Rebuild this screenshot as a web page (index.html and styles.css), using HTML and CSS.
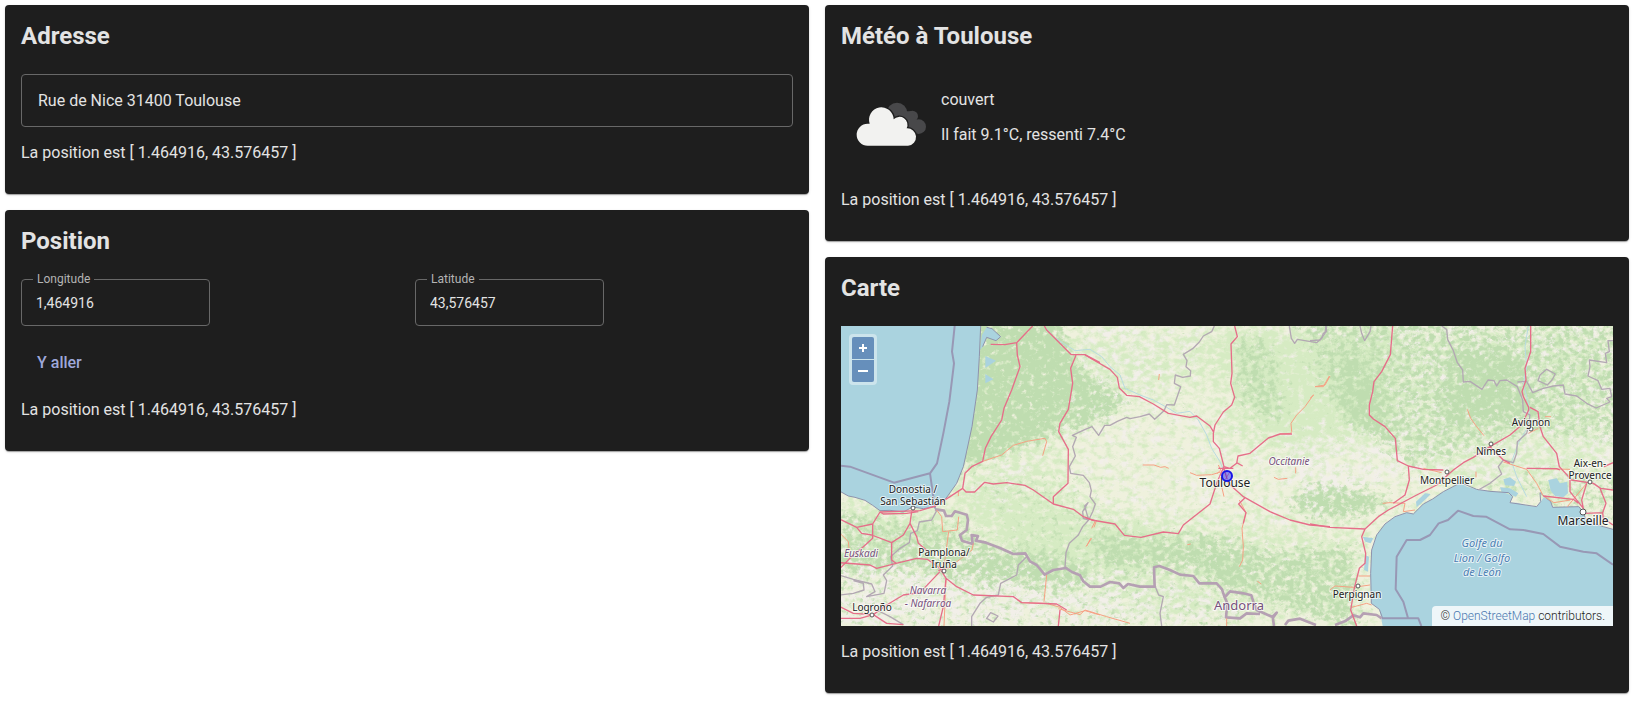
FILE: index.html
```html
<!DOCTYPE html>
<html lang="fr">
<head>
<meta charset="utf-8">
<title>Adresse, position, météo et carte</title>
<link rel="stylesheet" href="styles.css">
</head>
<body>
<main class="board">
  <div class="column">
    <section class="card">
      <h2 class="card-title">Adresse</h2>
      <input class="address" type="text" aria-label="Adresse" value="Rue de Nice 31400 Toulouse">
      <p class="text">La position est [ 1.464916, 43.576457 ]</p>
    </section>
    <section class="card">
      <h2 class="card-title">Position</h2>
      <div class="fields">
        <div class="field">
          <label class="field-label" for="lon">Longitude</label>
          <input class="field-input" id="lon" type="text" value="1,464916">
        </div>
        <div class="field">
          <label class="field-label" for="lat">Latitude</label>
          <input class="field-input" id="lat" type="text" value="43,576457">
        </div>
      </div>
      <button class="go" type="button">Y aller</button>
      <p class="text">La position est [ 1.464916, 43.576457 ]</p>
    </section>
  </div>
  <div class="column">
    <section class="card">
      <h2 class="card-title">Météo à Toulouse</h2>
      <div class="weather">
        <svg class="weather-icon" viewBox="72 223 300 300" aria-hidden="true">
          <g fill="#48484a">
            <circle cx="240" cy="340" r="31"/><circle cx="286" cy="350" r="17"/><circle cx="305" cy="381" r="22"/>
            <path d="M240 335H286L300 365V403H250Z"/>
          </g>
          <g fill="#f2f2f0" stroke="#1e1e1e" stroke-width="8" paint-order="stroke">
            <path d="M152 438A33 33 0 0 1 152 372L158 372A37 37 0 1 1 230 359A24 24 0 0 1 269 386A26 26 0 1 1 273 438Z"/>
          </g>
        </svg>
        <div>
          <p class="text">couvert</p>
          <p class="text">Il fait 9.1°C, ressenti 7.4°C</p>
        </div>
      </div>
      <p class="text">La position est [ 1.464916, 43.576457 ]</p>
    </section>
    <section class="card">
      <h2 class="card-title">Carte</h2>
      <div class="map">
        <svg class="map-canvas" viewBox="0 0 772 300" preserveAspectRatio="xMidYMid slice" role="img" aria-label="Carte autour de Toulouse">
          <defs>
            <filter id="forest" filterUnits="userSpaceOnUse" x="0" y="0" width="772" height="300" color-interpolation-filters="sRGB">
              <feGaussianBlur in="SourceAlpha" stdDeviation="7" result="m"/>
              <feTurbulence type="fractalNoise" baseFrequency=".17 .2" numOctaves="5" seed="4"/>
              <feColorMatrix values="0 0 0 0 0 0 0 0 0 0 0 0 0 0 0 1 0 0 0 0" result="n"/>
              <feComposite in="m" in2="n" operator="arithmetic" k2=".5" k3=".5"/>
              <feComponentTransfer result="a"><feFuncA type="linear" slope="8" intercept="-3"/></feComponentTransfer>
              <feFlood flood-color="#bfddb0"/><feComposite in2="a" operator="in"/>
            </filter>
            <filter id="meadow" filterUnits="userSpaceOnUse" x="0" y="0" width="772" height="300" color-interpolation-filters="sRGB">
              <feGaussianBlur in="SourceAlpha" stdDeviation="12" result="m"/>
              <feTurbulence type="fractalNoise" baseFrequency=".14 .18" numOctaves="5" seed="11"/>
              <feColorMatrix values="0 0 0 0 0 0 0 0 0 0 0 0 0 0 0 1 0 0 0 0" result="n"/>
              <feComposite in="m" in2="n" operator="arithmetic" k2=".5" k3=".5"/>
              <feComponentTransfer result="a"><feFuncA type="linear" slope="6" intercept="-2"/></feComponentTransfer>
              <feFlood flood-color="#d6ebc3"/><feComposite in2="a" operator="in"/>
            </filter>
            <filter id="bare" filterUnits="userSpaceOnUse" x="0" y="0" width="772" height="300" color-interpolation-filters="sRGB">
              <feGaussianBlur in="SourceAlpha" stdDeviation="8" result="m"/>
              <feTurbulence type="fractalNoise" baseFrequency=".1" numOctaves="5" seed="23"/>
              <feColorMatrix values="0 0 0 0 0 0 0 0 0 0 0 0 0 0 0 1 0 0 0 0" result="n"/>
              <feComposite in="m" in2="n" operator="arithmetic" k2=".5" k3=".5"/>
              <feComponentTransfer result="a"><feFuncA type="linear" slope="8" intercept="-2.8"/></feComponentTransfer>
              <feFlood flood-color="#f2efe9"/><feComposite in2="a" operator="in"/>
            </filter>
          </defs>
          <rect width="772" height="300" fill="#eff1dd"/>
          <g filter="url(#bare)">
            <path fill-opacity=".4" d="M0 190L100 215L200 235L390 265L400 300H0Z"/>
            <path fill-opacity=".35" d="M240 0H370L340 60L250 85L180 160L190 200L120 190L130 150L230 100Z"/>
            <path fill-opacity=".35" d="M400 0H772V160H600L560 150L500 190H470Z"/>
            <path fill-opacity=".2" d="M230 80H480V250H230Z"/>
          </g>
          <g filter="url(#meadow)">
            <path fill-opacity=".2" d="M0 0H772V300H0Z"/>
            <path fill-opacity=".2" d="M130 0H772V160L600 170L560 100L420 110L370 140L380 60L300 70L220 100L230 200L400 190L520 200L510 300H330L180 240L100 180L130 130Z"/>
            <path fill-opacity=".3" d="M360 0H560L540 110L430 130L400 60Z M110 165L240 180L350 210L300 240L180 230Z M0 170L120 190L100 230L0 240Z"/>
          </g>
          <g filter="url(#forest)">
            <path fill-opacity=".55" d="M130 -20H212L232 32L230 60L216 110L142 138L112 150Z"/>
            <path fill-opacity=".5" d="M190 -10L235 32L290 76L265 95L222 110L230 40Z"/>
            <path fill-opacity=".38" d="M392 10H430L450 90L420 100L395 70Z"/>
            <path fill-opacity=".34" d="M450 -20L790 -20V120L690 110L620 130L570 150L540 120L480 70Z"/>
            <path fill-opacity=".5" d="M440 180L470 158L520 160L560 175L510 195L470 190Z M640 160L670 156L690 170L640 168Z"/>
            <path fill-opacity=".42" d="M250 210L370 205L440 225L515 215L520 310L400 270L350 240L260 240Z"/>
            <path fill-opacity=".38" d="M-20 175L60 195L120 195L160 220L250 235L240 262L130 255L70 240L-20 250Z"/>
            <path fill-opacity=".18" d="M-20 230H400V320H-20Z M130 150L240 150L300 220L180 230Z"/>
            <path fill-opacity=".28" d="M680 145L790 140V200L700 190Z M610 20L680 30L700 90L600 100Z M500 20L540 60L550 120L500 100Z"/>
          </g>

          <g class="water">
            <path transform="matrix(.33333 0 0 .33333 -1 -6)" d="M0 18H422L418 110L412 210L396 320L370 440L350 490L318 535L285 560L250 566L218 561L190 576L150 571L120 572L98 556L75 541L45 532L25 528L0 514Z M440 22L456 26L482 50L468 62L440 52L428 80L420 90L426 45Z M436 108L468 122L436 144Z M436 162L460 178L436 190Z"/>
            <path transform="matrix(.33333 0 0 .33333 469 -6)" d="M909 628L880 620L850 610L826 595L820 575L806 560L728 562L722 545L704 528L692 545L680 560L655 558L620 548L600 548L608 530L596 518L540 514L500 508L470 500L452 488L440 495L420 505L400 515L368 537L340 552L310 582L290 578L255 590L225 612L200 645L185 690L182 760L184 850L208 868L218 918H909Z M318 545L345 520L362 522L350 535L320 562Z M580 478L600 472L618 485L612 498L585 496Z M715 480L740 475L750 490L772 485L774 520L760 532L735 528L722 512Z M158 650L190 655L182 670L166 665Z M165 705L177 710L174 755L162 750Z M450 485L475 470L490 480L465 492Z M570 502L600 505L625 520L618 530L575 515Z"/>
          </g>
          <g class="river">
            <path transform="matrix(.33333 0 0 .33333 189 -6)" d="M42 18L70 50L100 70L135 92L180 88L215 110L240 140L270 165L285 205L330 225L370 240L410 262L440 280L480 274L505 300L530 345L545 385L570 425L585 460"/>
            <path transform="matrix(.33333 0 0 .33333 469 -6)" d="M655 18L645 80L650 140L640 190L655 250L660 310L625 370L605 425L620 470L650 530"/>
          </g>

          <g class="coast">
            <path transform="matrix(.33333 0 0 .33333 -1 -6)" d="M422 18L418 110L412 210L396 320L370 440L350 490L318 535L285 560L250 566L218 561L190 576L150 571L120 572L98 556L75 541L45 532L25 528L0 514 M440 22L456 26L482 50L468 62L440 52L428 80"/>
            <path transform="matrix(.33333 0 0 .33333 469 -6)" d="M909 628L880 620L850 610L826 595L820 575L806 560L728 562L722 545L690 518L692 545L680 560L600 548L608 530L596 518L540 514L500 508L452 488L400 515L368 537L340 552L310 582L290 578L255 590L225 612L200 645L185 690L182 760L184 850L208 868L218 895"/>
          </g>

          <g class="region">
            <path transform="matrix(.33333 0 0 .33333 189 -6)" d="M553 18L545 35L520 48L508 66L488 86L460 103L471 122L468 140L482 152L481 168L458 172L436 165L433 190L452 200L440 235L433 255L410 254L402 272L374 298L358 282L330 290L300 296L290 292L262 304L240 316L224 316L206 346L186 320L164 329L127 346L139 352L128 380L136 408L118 440L122 460L160 466L178 488L184 512L180 530L196 552L188 575L176 600L160 595L158 575L174 548L164 558L176 600L158 620L145 645L118 670L108 698L105 742 M778 18L784 55L794 70L802 58L860 68L875 55L880 40L890 34L888 18 M376 800L386 825L400 830L390 880L395 918"/>
            <path transform="matrix(.33333 0 0 .33333 469 -6)" d="M0 62L30 60L45 40L48 18 M150 18L155 40L164 62L180 35L183 18 M395 18L410 28L413 58L430 92L442 128L458 150L460 186L480 184L516 208L534 180L552 182L560 198L570 182L590 180L622 200L630 220L638 240L640 275L660 285L655 320L650 340L622 365L620 400L610 428L580 420L565 440L575 462L540 490L505 510 M622 186L650 184L668 218L700 205L730 198L760 195L765 222L800 228L830 250L858 264L900 246L890 235L905 230L900 205L875 208L864 182L834 168L840 140L838 120L890 128L886 100L898 95L894 62H909 M690 165L710 148L736 162L726 180L712 195L684 182Z"/>
            <path transform="matrix(.33333 0 0 .33333 -1 -6)" d="M290 572L275 600L238 606L232 632L212 640L208 668L180 685L152 710L158 738L130 765L140 782L132 820L80 830L105 815L95 792L40 778L0 766 M0 825L40 820L72 810L70 790L40 782 M560 710L535 735L530 765L482 790L475 825L440 832L420 850L395 890L395 918 M440 895L452 878L474 888L460 906Z M110 870L150 890L190 914"/>
          </g>

          <g class="border">
            <path transform="matrix(.33333 0 0 .33333 -1 -6)" d="M285 568L312 572L318 588L335 588L345 574L380 584L384 600L380 630L360 645L366 662L398 672L395 645L414 648L408 662L438 668L480 684L520 702L556 700L570 724L590 735L614 764L640 750L678 744"/>
            <path transform="matrix(.33333 0 0 .33333 189 -6)" d="M105 742L126 756L150 766L160 784L180 800L212 800L240 786L268 790L280 804L294 792L330 800L374 800L372 742L388 738L420 750L450 764L490 768L508 790L560 790L576 808L584 832L600 814L640 820L664 826L670 845L680 870L712 884L730 892L740 878L728 890L732 918 M584 832L592 850L588 892L630 895L650 880L690 882 M765 915L775 902L810 896L858 915"/>
            <path transform="matrix(.33333 0 0 .33333 469 -6)" d="M75 915L108 902L130 886L150 892L160 880L200 885L215 895"/>
          </g>

          <g class="maritime">
            <path transform="matrix(.33333 0 0 .33333 -1 -6)" d="M344 18L336 95L342 130L328 245L310 340L291 430L270 460L162 488L30 440L0 437 M270 460L285 565"/>
            <path transform="matrix(.33333 0 0 .33333 469 -6)" d="M216 895H325L334 918 M294 894L280 845L257 808L260 710L290 660L330 660L360 645L386 610L414 600L444 572L490 588L528 590L600 628L640 630L700 642L750 680L820 695L860 700L909 734"/>
          </g>

          <g class="secondary">
            <path transform="matrix(.33333 0 0 .33333 -1 -6)" d="M428 424L485 405L520 376L560 364L615 355L620 365L608 407 M290 570L305 590L308 635L352 630L356 590 M326 635L312 740 M0 640L25 665L30 715 M400 670L396 690L325 745 M620 765L612 845 M545 848L620 850L660 862L690 885L735 872L780 885 M318 780L312 918 M765 605L755 625 M755 655L738 680 M355 512V528"/>
            <path transform="matrix(.33333 0 0 .33333 189 -6)" d="M900 168L885 195L855 200 M850 225L825 260L800 285L783 310L785 335L782 340L750 342 M338 435H372L392 442L405 440L416 445 M480 458L500 466L545 464L572 456 M574 495L582 530 M628 540L648 578L636 625L640 680L638 720L628 740 M732 472L745 478L772 475 M797 442V460 M388 162L386 180 M200 600L192 622 M182 655L170 678 M472 674L482 672 M682 784L694 792 M85 866L150 884L165 870L230 890L300 910 M590 895V918 M565 435L572 450L560 462 M585 480L600 455"/>
            <path transform="matrix(.33333 0 0 .33333 469 -6)" d="M15 200H40L58 168 M0 235L12 224 M472 268L482 295L500 320L522 347 M580 426L650 448L680 490L700 528L732 548L782 540 M650 445L780 448 M218 550L240 548L285 550L280 575L315 570 M60 810L75 798L130 802L180 795 M125 862L170 850L185 855 M705 290H723 M145 768H180 M772 560L830 490 M340 445L395 458 M498 455V472 M655 340L685 325"/>
          </g>

          <g class="motorway">
            <path transform="matrix(.33333 0 0 .33333 -1 -6)" d="M578 18L555 42L530 68L532 105L540 140L515 210L492 265L485 300L453 350L436 385L428 424L395 440L375 460L368 505L330 530L286 558L240 572L120 576L98 612L50 622L0 598 M452 73L495 74L530 68 M613 18L620 30L650 60L694 104H735L780 128 M708 106L692 145L698 190L685 268L660 310L656 335L685 388L684 490L640 530V552 M368 505L378 516L404 516L434 487L460 492L500 488L555 496L580 510L640 552L700 568L730 590L765 603 M120 576L130 582L200 580L235 575 M98 612V655L70 680L30 715L0 745 M50 622L65 640L95 645L155 668L190 645L210 610L215 575 M155 668V720L168 730L230 715L262 718L300 745L318 775L350 800L400 825L520 830L545 848L650 852L680 870 M0 728L90 735L110 745L168 730 M210 610L230 650L235 670L265 695 M300 755L240 818L190 825L140 855L100 884L60 895L0 895 M100 884L140 910L190 914 M0 860L40 880L100 884 M318 775L310 860L296 918 M660 870L655 918 M295 752L325 742"/>
            <path transform="matrix(.33333 0 0 .33333 189 -6)" d="M614 18L622 50L603 72L606 160L602 190L614 232L605 255L580 276L555 315L550 340V365L568 385L582 440L600 445L620 430L624 408L660 400L715 354L750 342L786 342 M165 105L240 148L262 172L268 204L290 226L328 230L370 252L415 280L480 292L500 288L540 318L550 335 M582 440L575 455L560 490L540 552L460 615L445 641L400 636L333 652L283 646L255 612L185 600L165 592 M580 440L595 490L640 530L720 575L780 600L840 615L900 620 M645 533L626 552L648 578L640 610 M565 445H610 M620 428L638 438"/>
            <path transform="matrix(.33333 0 0 .33333 469 -6)" d="M248 18L241 104L215 155L192 185L188 215L178 255V285L190 297L225 320L256 355L262 422L295 438L340 448L400 450 M295 438L298 480L285 525L250 550 M0 612L60 622L165 627L205 590L235 570L320 525L380 495L430 450L460 428L490 412L540 380L600 345L635 315L656 270V262L640 230L636 215L648 180L645 145L662 95V18 M660 262L684 275L690 320L700 350L740 400L748 440L785 480L850 490L872 505L909 510 M540 380L580 420L600 430 M165 627L155 650L167 700L165 730L148 745L134 800L122 870L140 918 M650 445L740 446L750 450 M780 480V515L820 565L826 580L878 578L888 550L870 505 M700 528L790 538L805 550 M830 490L815 540L820 565 M882 440L909 428 M878 578L880 595L909 615"/>
          </g>

          <g class="town">
            <circle cx="72" cy="182" r="2"/><circle cx="103" cy="245" r="2"/><circle cx="31" cy="289" r="2"/><circle cx="517" cy="260" r="2"/><circle cx="606" cy="146" r="2"/><circle cx="650" cy="118" r="2"/><circle cx="690" cy="103" r="2"/><circle cx="749" cy="156" r="2"/><circle cx="742" cy="186" r="3"/>
          </g>
          <g class="place">
            <text x="72" y="167">Donostia /</text><text x="72" y="179">San Sebastián</text>
            <text x="103" y="230">Pamplona/</text><text x="103" y="242">Iruña</text>
            <text x="31" y="285">Logroño</text><text x="516" y="272">Perpignan</text>
            <text x="606" y="158">Montpellier</text><text x="650" y="129">Nîmes</text>
            <text x="690" y="100">Avignon</text><text x="749" y="141">Aix-en-</text><text x="749" y="153">Provence</text>
            <text class="city" x="384" y="161">Toulouse</text><text class="city" x="742" y="199">Marseille</text>
          </g>
          <g class="area">
            <text x="448" y="139">Occitanie</text><text x="20" y="231">Euskadi</text>
            <text x="87" y="268">Navarra</text><text x="87" y="281">- Nafarroa</text>
            <text class="country" x="398" y="284">Andorra</text>
          </g>
          <g class="gulf">
            <text x="641" y="221">Golfe du</text><text x="641" y="236">Lion / Golfo</text><text x="641" y="250">de León</text>
          </g>
          <circle class="marker" cx="386" cy="150" r="5"/>
        </svg>
        <div class="zoom">
          <button class="zoom-button" type="button" aria-label="Zoom avant"><svg viewBox="0 0 10 10" aria-hidden="true"><path d="M5 1V9M1 5H9"/></svg></button>
          <button class="zoom-button" type="button" aria-label="Zoom arrière"><svg viewBox="0 0 10 10" aria-hidden="true"><path d="M0 5H10"/></svg></button>
        </div>
        <div class="attribution">© <a href="#">OpenStreetMap</a> contributors.</div>
      </div>
      <p class="text">La position est [ 1.464916, 43.576457 ]</p>
    </section>
  </div>
</main>
</body>
</html>
```
FILE: styles.css
```css
* { box-sizing: border-box; }
body {
  margin: 0;
  background: #fff;
  color: #e3e3e3;
  font: 16px/19px Roboto, "Liberation Sans", sans-serif;
}
.board {
  display: grid;
  grid-template-columns: repeat(2, minmax(0, 1fr));
  align-items: start;
  gap: 16px;
  padding: 5px;
}
.column { display: grid; gap: 16px; }
.card {
  padding: 16px;
  border-radius: 4px;
  background: #1e1e1e;
  box-shadow: 0 2px 1px -1px rgba(0, 0, 0, .2), 0 1px 1px rgba(0, 0, 0, .14), 0 1px 3px rgba(0, 0, 0, .12);
}
.card-title { margin: 0 0 23px; font-size: 24px; line-height: 30px; font-weight: 700; }
.text { margin: 16px 0; }
input { color: #e3e3e3; font-family: inherit; background: transparent; border: 1px solid #686868; border-radius: 4px; }
.address { display: block; width: 100%; height: 53px; padding: 0 16px; font-size: 16px; }
.fields { display: grid; grid-template-columns: 1fr 1fr; gap: 16px; }
.field { position: relative; width: 50%; }
.field-label {
  position: absolute;
  top: -8px;
  left: 12px;
  padding: 0 4px;
  background: #1e1e1e;
  color: #b4b4b4;
  font-size: 12px;
  line-height: 16px;
}
.field-input { display: block; width: 100%; height: 47px; padding: 0 14px; font-size: 14px; }
.go {
  display: block;
  margin: 19px 0;
  padding: 8px 16px;
  border: 0;
  border-radius: 4px;
  background: transparent;
  color: #9fa8da;
  font: 500 16px/20px Roboto, "Liberation Sans", sans-serif;
}
.weather { display: flex; }
.weather-icon { width: 100px; height: 100px; }

.map { position: relative; height: 300px; overflow: hidden; }
.map-canvas { display: block; width: 100%; height: 100%; font-family: "Noto Sans", sans-serif; font-size: 10px; }
.map-canvas path { stroke-linejoin: round; }
.map-canvas text { text-anchor: middle; paint-order: stroke; stroke: rgba(255, 255, 255, .7); stroke-width: 2px; stroke-linejoin: round; }
.water { fill: #aad3df; }
.river, .coast, .region, .border, .maritime, .secondary, .motorway { fill: none; }
.river { stroke: #b9dbe0; stroke-width: 3; }
.coast { stroke: #8f93ad; stroke-width: 3; }
.region { stroke: #b3a8b3; stroke-width: 4; }
.border { stroke: #b5a0b3; stroke-width: 8; }
.maritime { stroke: #9898b5; stroke-width: 6; }
.secondary { stroke: #f6a184; stroke-width: 3; }
.motorway { stroke: #e66e89; stroke-width: 4; }
.town { fill: #fff; stroke: #555; stroke-width: 1; }
.place { fill: #222; }
.area { fill: #76517c; font-style: italic; }
.gulf { fill: #4d80b3; font-size: 11px; font-style: italic; }
.city { font-size: 12px; }
.country { font-size: 13px; font-style: normal; }
.marker { fill: rgba(0, 0, 255, .4); stroke: #1616e6; stroke-width: 2; }

.zoom {
  position: absolute;
  top: 8px;
  left: 8px;
  display: grid;
  gap: 1px;
  padding: 3px;
  border-radius: 4px;
  background: rgba(255, 255, 255, .4);
}
.zoom-button {
  display: grid;
  place-items: center;
  width: 22px;
  height: 22px;
  padding: 0;
  border: 0;
  border-radius: 2px 2px 0 0;
  background: #668fbb;
}
.zoom-button:last-child { border-radius: 0 0 2px 2px; }
.zoom-button svg { width: 10px; height: 10px; fill: none; stroke: #fff; stroke-width: 2; }
.attribution {
  position: absolute;
  right: 0;
  bottom: 0;
  padding: 0 8px;
  border-radius: 4px 0 0;
  background: rgba(255, 255, 255, .8);
  color: #222;
  font-size: 12px;
  font-weight: 300;
  line-height: 20px;
}
.attribution a { color: #4a78b0; text-decoration: none; }
```
